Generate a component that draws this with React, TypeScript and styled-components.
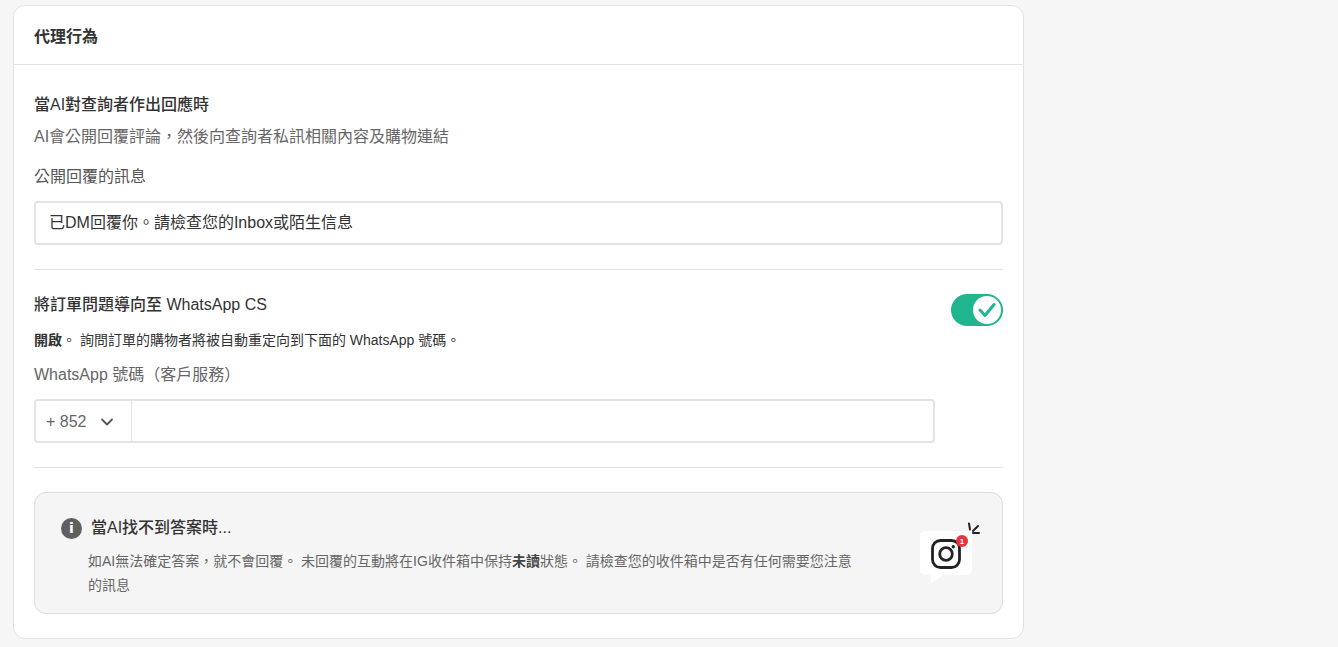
import React from 'react';
import styled, { createGlobalStyle } from 'styled-components';

const GlobalStyle = createGlobalStyle`
  html, body {
    margin: 0;
    padding: 0;
    height: 647px;
    overflow: hidden;
    background: #f6f6f6;
    font-family: 'Liberation Sans', 'Noto Sans CJK TC', sans-serif;
    color: #333;
  }
`;

const InstagramBubble: React.FC = () => (
  <svg width="64" height="64" viewBox="0 0 64 64" fill="none">
    <path d="M8 10h42a5 5 0 0 1 5 5v34a5 5 0 0 1-5 5H26l-11 8a1 1 0 0 1-1.500-1v-7H8a5 5 0 0 1-5-5V15a5 5 0 0 1 5-5z" fill="#fff" />
    <rect x="15.500" y="19.500" width="27" height="27" rx="8" stroke="#222" strokeWidth="2.800" />
    <circle cx="29" cy="33" r="6.300" stroke="#222" strokeWidth="2.800" />
    <circle cx="36.300" cy="25.700" r="1.700" fill="#222" />
    <circle cx="45" cy="20" r="6" fill="#e5343f" />
    <text x="45" y="23" fontSize="8" fontWeight="700" textAnchor="middle" fill="#fff" fontFamily="Liberation Sans">
      1
    </text>
    <path d="M52 2.500l1 6M56 10l5-5M56 12h6" stroke="#222" strokeWidth="2" strokeLinecap="round" />
  </svg>
);

const App: React.FC = () => (
  <Page>
    <GlobalStyle />
    <Card>
      <CardHeader>代理行為</CardHeader>
      <CardBody>
        <Section>
          <Heading>當AI對查詢者作出回應時</Heading>
          <SubText>AI會公開回覆評論，然後向查詢者私訊相關內容及購物連結</SubText>
          <FieldLabel>公開回覆的訊息</FieldLabel>
          <TextInput defaultValue="已DM回覆你。請檢查您的Inbox或陌生信息" />
        </Section>
        <Divider />
        <ToggleSection>
          <ToggleRow>
            <Heading>將訂單問題導向至 WhatsApp CS</Heading>
            <Toggle>
              <ToggleKnob>
                <svg width="18" height="16" viewBox="0 0 18 16" fill="none">
                  <path d="M2 8l5 5.500L16 2.500" stroke="#1fb58f" strokeWidth="3" strokeLinecap="round" strokeLinejoin="round" />
                </svg>
              </ToggleKnob>
            </Toggle>
          </ToggleRow>
          <SmallText>
            <b>開啟</b>。 詢問訂單的購物者將被自動重定向到下面的 WhatsApp 號碼。
          </SmallText>
          <WhatsAppLabel>WhatsApp 號碼（客戶服務）</WhatsAppLabel>
          <PhoneField>
            <CountryCode>
              + 852
              <svg width="14" height="14" viewBox="0 0 14 14" fill="none">
                <path d="M2 4.500l5 5 5-5" stroke="#555" strokeWidth="1.800" strokeLinecap="round" strokeLinejoin="round" />
              </svg>
            </CountryCode>
            <PhoneInput />
          </PhoneField>
        </ToggleSection>
        <Divider />
        <Notice>
          <NoticeContent>
            <NoticeTitle>
              <InfoDot>i</InfoDot>
              當AI找不到答案時...
            </NoticeTitle>
            <NoticeText>
              如AI無法確定答案，就不會回覆。 未回覆的互動將在IG收件箱中保持<b>未讀</b>狀態。 請檢查您的收件箱中是否有任何需要您注意的訊息
            </NoticeText>
          </NoticeContent>
          <InstagramBubble />
        </Notice>
      </CardBody>
    </Card>
  </Page>
);

export default App;

const Page = styled.div`
  padding: 5px 0 0 13px;
`;

const Card = styled.div`
  width: 1011px;
  height: 634px;
  box-sizing: border-box;
  background: #fff;
  border: 1px solid #e3e3e3;
  border-radius: 12px;
`;

const CardHeader = styled.div`
  height: 59px;
  box-sizing: border-box;
  padding: 0 20px;
  display: flex;
  align-items: center;
  font-size: 16px;
  font-weight: 700;
  color: #333;
  border-bottom: 1px solid #e3e3e3;
`;

const CardBody = styled.div`
  padding: 29px 20px 0;
`;

const Section = styled.div`
  display: flex;
  flex-direction: column;
`;

const Heading = styled.div`
  font-size: 16px;
  line-height: 22px;
  font-weight: 500;
  color: #333;
`;

const SubText = styled.div`
  margin-top: 10px;
  font-size: 16px;
  line-height: 22px;
  color: #666;
`;

const FieldLabel = styled.div`
  margin-top: 18px;
  font-size: 16px;
  line-height: 22px;
  color: #555;
`;

const TextInput = styled.input`
  margin-top: 13px;
  height: 44px;
  box-sizing: border-box;
  width: 100%;
  padding: 0 13px 5px;
  border: 2px solid #e3e3e3;
  border-radius: 4px;
  font: inherit;
  font-size: 16px;
  color: #333;
  outline: none;
`;

const Divider = styled.div`
  height: 1px;
  background: #e3e3e3;
  margin: 24px 0;
`;

const ToggleSection = styled.div`
  display: flex;
  flex-direction: column;
`;

const ToggleRow = styled.div`
  display: flex;
  justify-content: space-between;
  align-items: flex-start;
  height: 32px;
`;

const Toggle = styled.div`
  width: 52px;
  height: 32px;
  box-sizing: border-box;
  padding: 2px;
  border-radius: 16px;
  background: #1fb58f;
  display: flex;
  justify-content: flex-end;
`;

const ToggleKnob = styled.div`
  width: 28px;
  height: 28px;
  border-radius: 50%;
  background: #fff;
  display: flex;
  align-items: center;
  justify-content: center;
`;

const SmallText = styled.div`
  margin-top: 4px;
  font-size: 14px;
  line-height: 20px;
  color: #333;
`;

const WhatsAppLabel = styled.div`
  margin-top: 14px;
  font-size: 16px;
  line-height: 22px;
  color: #666;
`;

const PhoneField = styled.div`
  margin-top: 13px;
  width: 901px;
  height: 44px;
  box-sizing: border-box;
  display: flex;
  border: 2px solid #e3e3e3;
  border-radius: 4px;
`;

const CountryCode = styled.div`
  width: 96px;
  box-sizing: border-box;
  padding: 1px 17px 0 10px;
  display: flex;
  align-items: center;
  justify-content: space-between;
  font-size: 16px;
  color: #666;
  border-right: 1px solid #e3e3e3;
`;

const PhoneInput = styled.input`
  flex: 1;
  min-width: 0;
  border: none;
  outline: none;
  background: transparent;
`;

const Notice = styled.div`
  height: 122px;
  box-sizing: border-box;
  padding: 0 21px 0 26px;
  display: flex;
  align-items: center;
  justify-content: space-between;
  background: #f5f5f5;
  border: 1px solid #dcdcdc;
  border-radius: 12px;
`;

const NoticeContent = styled.div`
  width: 795px;
  padding-top: 8px;
`;

const NoticeTitle = styled.div`
  display: flex;
  align-items: center;
  gap: 10px;
  font-size: 16px;
  line-height: 22px;
  font-weight: 500;
  color: #333;
`;

const InfoDot = styled.span`
  width: 21px;
  height: 21px;
  margin-right: -1px;
  border-radius: 50%;
  background: #5f5f5f;
  color: #fff;
  font-size: 14px;
  font-weight: 700;
  display: flex;
  align-items: center;
  justify-content: center;
  font-family: 'DejaVu Sans', sans-serif;
`;

const NoticeText = styled.div`
  margin-top: 10px;
  padding-left: 27px;
  font-size: 14px;
  line-height: 24px;
  color: #666;

  b {
    color: #444;
  }
`;
